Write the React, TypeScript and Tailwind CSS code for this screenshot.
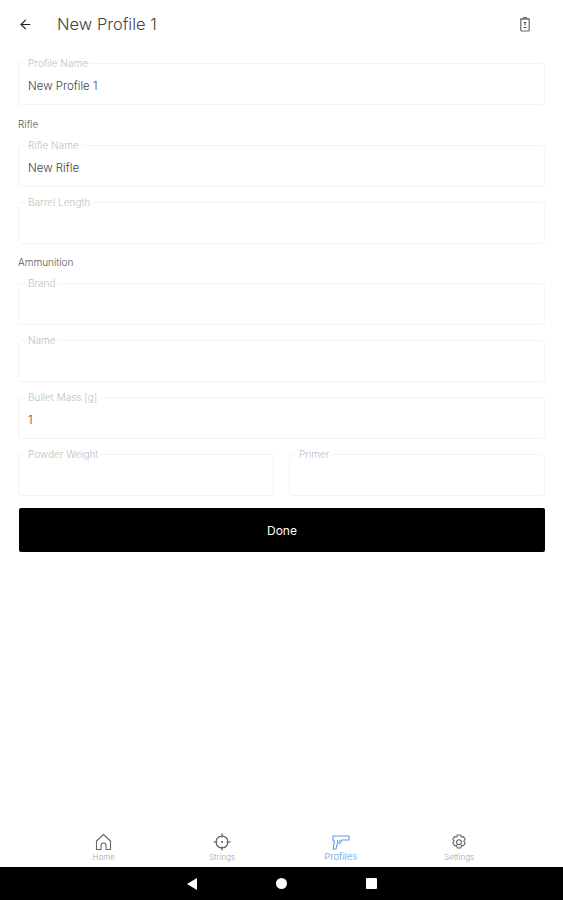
import React from 'react'
import { ArrowLeft } from 'lucide-react'

type FieldProps = {
  label: string
  value?: string
  className?: string
}

function Field({ label, value, className = '' }: FieldProps) {
  return (
    <div className={`relative flex h-[42px] items-center rounded-[3px] border border-[#f4f4f4] px-[9px] pt-[5px] ${className}`}>
      <span className="absolute left-[6px] top-[-7px] bg-white px-[3px] text-[10px] leading-[12px] text-[#c0c0c0]">
        {label}
      </span>
      <span className="text-[11.5px] text-[#444]">{value}</span>
    </div>
  )
}

function TrashIcon() {
  return (
    <svg width="12" height="16" viewBox="0 0 12 16" fill="none" stroke="#666" strokeWidth="1.2">
      <path d="M4 1.500h4M1 3h10" />
      <rect x="1.800" y="3" width="8.400" height="12" rx="1" />
      <path d="M4.500 6.500h3M6 6.500v3M4.500 11.500h3" />
    </svg>
  )
}

function HomeIcon() {
  return (
    <svg width="17" height="18" viewBox="0 0 17 18" fill="none" stroke="#666" strokeWidth="1.1" strokeLinejoin="round">
      <path d="M8.500 1.500l7 6.500v8.500h-4.500v-4a2.500 2.500 0 0 0-5 0v4h-4.500v-8.500z" />
    </svg>
  )
}

function TargetIcon() {
  return (
    <svg width="18" height="18" viewBox="0 0 18 18" fill="none" stroke="#555" strokeWidth="1.1">
      <circle cx="9" cy="9" r="6" />
      <path d="M9 .5v4M9 13.500v4M.5 9h4M13.500 9h4" />
      <circle cx="9" cy="9" r="1" fill="#555" stroke="none" />
    </svg>
  )
}

function GunIcon() {
  return (
    <svg width="18" height="15" viewBox="0 0 18 15" fill="none" stroke="#5b9cf5" strokeWidth="1.1">
      <path d="M1 1h16v4h-7.500l-1 3h-3l-1.500 6h-3l1.500-7.500-1.500-1z" />
      <path d="M5.500 5v3M8 5l-.5 1.500" />
    </svg>
  )
}

function GearIcon() {
  return (
    <svg width="16" height="17" viewBox="0 0 16 17" fill="none" stroke="#666" strokeWidth="1.1" strokeLinejoin="round">
      <path d="M6.300 1h3.400l.7 2 2.100-.4 1.700 2.900-1.400 1.600 1.400 1.800-1.700 2.900-2.100-.4-.7 2.600h-3.400l-.7-2.600-2.100.4-1.700-2.900 1.400-1.800-1.400-1.600 1.700-2.900 2.100.4z" />
      <circle cx="8" cy="8.200" r="2.400" />
    </svg>
  )
}

function NavItem({ icon, label, active }: { icon: React.ReactNode; label: string; active?: boolean }) {
  return (
    <div className="flex w-[118.500px] flex-col items-center">
      <div className="flex h-[18px] items-center">{icon}</div>
      <span className={`text-[8px] leading-[12px] ${active ? 'text-[9.500px] text-[#5b9cf5]' : 'text-[#a8a8a8]'}`}>{label}</span>
    </div>
  )
}

export default function App() {
  return (
    <div className="flex h-[900px] w-[563px] flex-col bg-white font-['Inter',sans-serif] font-light">
      {/* Header */}
      <div className="flex h-[47px] items-center pl-[18px] pr-[32px] pt-[1px]">
        <ArrowLeft size={15} strokeWidth={1.75} className="text-[#222]" />
        <span className="ml-[24px] text-[16.500px] text-[#444]">New Profile 1</span>
        <div className="ml-auto">
          <TrashIcon />
        </div>
      </div>

      {/* Form */}
      <div className="flex flex-col px-[18px] pt-[16px]">
        <Field label="Profile Name" value="New Profile 1" />
        <div className="mt-[12px] h-[15px] text-[10px] leading-[15px] text-[#555]">Rifle</div>
        <Field label="Rifle Name" value="New Rifle" className="mt-[13px]" />
        <Field label="Barrel Length" className="mt-[15px]" />
        <div className="mt-[11px] h-[15px] text-[10px] leading-[15px] text-[#555]">Ammunition</div>
        <Field label="Brand" className="mt-[13px]" />
        <Field label="Name" className="mt-[15px]" />
        <Field label="Bullet Mass [g]" value="1" className="mt-[15px]" />
        <div className="mt-[15px] flex gap-[15px]">
          <Field label="Powder Weight" className="flex-1" />
          <Field label="Primer" className="flex-1" />
        </div>
        <button className="ml-[1px] mt-[12px] flex h-[44px] items-center justify-center rounded-[2px] bg-black pt-[1px] text-[12px] font-normal text-white">
          Done
        </button>
      </div>

      {/* Bottom nav */}
      <div className="mt-auto flex h-[34px] justify-center">
        <NavItem icon={<HomeIcon />} label="Home" />
        <NavItem icon={<TargetIcon />} label="Strings" />
        <NavItem icon={<GunIcon />} label="Profiles" active />
        <NavItem icon={<GearIcon />} label="Settings" />
      </div>

      {/* Android system bar */}
      <div className="flex h-[33px] items-center justify-center gap-[79px] bg-black">
        <div className="h-0 w-0 border-y-[6px] border-r-[10px] border-y-transparent border-r-white" />
        <div className="h-[11px] w-[11px] rounded-full bg-white" />
        <div className="h-[11px] w-[11px] rounded-[1px] bg-white" />
      </div>
    </div>
  )
}
